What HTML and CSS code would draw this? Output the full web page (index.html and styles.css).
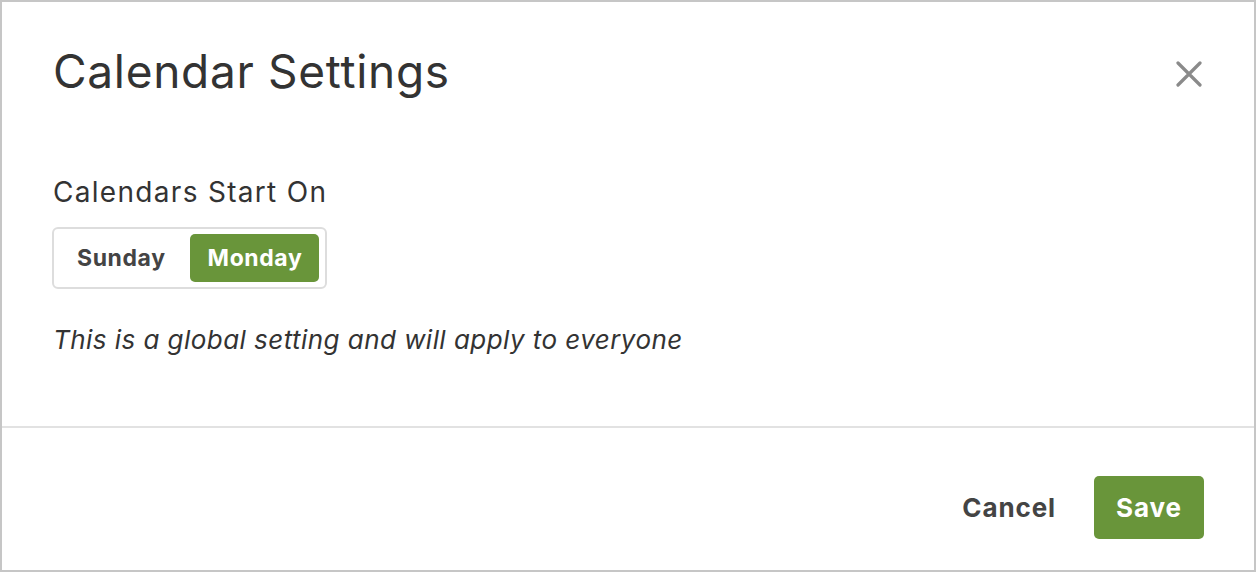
FILE: index.html
```html
<!DOCTYPE html>
<html>
  <head>
    <meta charset="UTF-8" />
    <title>Calendar Settings</title>
    <link rel="stylesheet" href="styles.css">
  </head>
  <body>
    <div class="modal">
      <div class="modal-header">
        <h1 class="modal-title">Calendar Settings</h1>
        <button class="modal-close" aria-label="Close">
          <svg viewBox="0 0 26 26" fill="none" xmlns="http://www.w3.org/2000/svg">
            <path
              d="M2 2L24 24M24 2L2 24"
              stroke="currentColor"
              stroke-width="3.2"
              stroke-linecap="round"
            />
          </svg>
        </button>
      </div>

      <div class="modal-body">
        <div class="field-label">Calendars Start On</div>
        <div class="segmented">
          <button class="segment">Sunday</button>
          <button class="segment active">Monday</button>
        </div>
        <p class="field-note">This is a global setting and will apply to everyone</p>
      </div>

      <div class="modal-footer">
        <button class="button cancel-button">Cancel</button>
        <button class="button save-button">Save</button>
      </div>
    </div>
  </body>
</html>
```

FILE: styles.css
```css
:root {
  --primary: #69953a;
  --text-primary: #333333;
  --text-secondary: #444444;
  --border-outer: #c6c6c6;
  --border-light: #dddddd;
  --divider: #e2e2e2;
  --close: #8a8a8a;
}

* {
  margin: 0;
  padding: 0;
  box-sizing: border-box;
}

body {
  font-family: Inter, "Noto Sans", Arial, sans-serif;
  background-color: #ffffff;
  color: var(--text-primary);
  width: 1256px;
  height: 572px;
  overflow: hidden;
}

.modal {
  width: 1256px;
  height: 572px;
  border: 2px solid var(--border-outer);
  display: flex;
  flex-direction: column;
}

.modal-header {
  display: flex;
  align-items: flex-start;
  justify-content: space-between;
  padding: 39px 52px 0 51px;
}

.modal-title {
  font-size: 46px;
  font-weight: 400;
  line-height: 60px;
  letter-spacing: 0.7px;
}

.modal-close {
  border: none;
  background: none;
  color: var(--close);
  width: 26px;
  height: 26px;
  margin-top: 20px;
  cursor: pointer;
}

.modal-close svg {
  display: block;
  width: 26px;
  height: 26px;
}

.modal-body {
  padding: 73px 51px 0;
  flex: 1;
}

.field-label {
  font-size: 28px;
  line-height: 36px;
  letter-spacing: 1.3px;
}

.segmented {
  display: inline-flex;
  align-items: center;
  gap: 7px;
  margin: 17px 0 0 -1px;
  padding: 5px 6px 5px 5px;
  border: 2px solid var(--border-light);
  border-radius: 6px;
}

.segment {
  font-family: inherit;
  font-size: 23px;
  font-weight: 700;
  letter-spacing: 0.6px;
  color: var(--text-secondary);
  background: none;
  border: none;
  border-radius: 5px;
  height: 48px;
  padding: 0 17px 0 18px;
  cursor: pointer;
}

.segment.active {
  background-color: var(--primary);
  color: #ffffff;
}

.field-note {
  margin-top: 33px;
  font-size: 26px;
  font-style: italic;
  line-height: 36px;
  letter-spacing: 0.45px;
}

.modal-footer {
  display: flex;
  justify-content: flex-end;
  align-items: center;
  gap: 38px;
  border-top: 2px solid var(--divider);
  padding: 48px 50px 31px;
}

.button {
  font-family: inherit;
  font-size: 26px;
  font-weight: 700;
  letter-spacing: 0.9px;
  border: none;
  border-radius: 5px;
  cursor: pointer;
  height: 63px;
}

.cancel-button {
  background: none;
  color: var(--text-secondary);
}

.save-button {
  background-color: var(--primary);
  color: #ffffff;
  width: 110px;
}
```
